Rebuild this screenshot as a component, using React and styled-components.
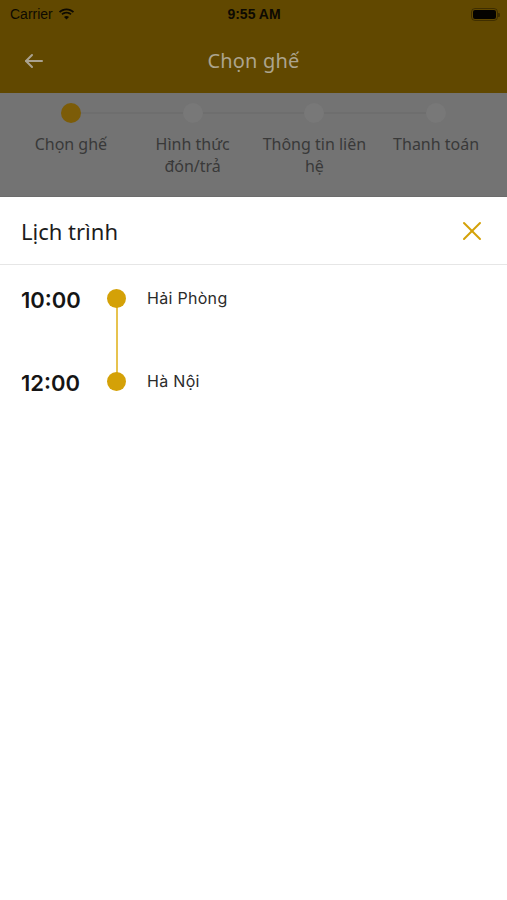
import styled, { createGlobalStyle } from "styled-components";

const GlobalStyle = createGlobalStyle`
  html, body {
    margin: 0;
    padding: 0;
    background: #ffffff;
  }
  * {
    box-sizing: border-box;
  }
`;

const Screen = styled.div`
  width: 507px;
  height: 900px;
  display: flex;
  flex-direction: column;
  font-family: "Noto Sans", "Open Sans", sans-serif;
  overflow: hidden;
`;

const TopArea = styled.div`
  background: #614800;
`;

const StatusBar = styled.div`
  height: 28px;
  display: grid;
  grid-template-columns: 1fr auto 1fr;
  align-items: center;
  padding: 0 9px 0 10px;
  color: #0d0a02;
  font-family: "Liberation Sans", Arial, sans-serif;
  font-size: 14px;
`;

const Carrier = styled.div`
  display: flex;
  align-items: center;
  gap: 5px;
`;

const Clock = styled.div`
  font-weight: 700;
`;

const Battery = styled.div`
  justify-self: end;
  width: 27px;
  height: 13px;
  border: 1px solid rgba(0, 0, 0, 0.35);
  border-radius: 4px;
  padding: 1px;
  position: relative;
  &::before {
    content: "";
    display: block;
    width: 100%;
    height: 100%;
    border-radius: 2px;
    background: #050300;
  }
  &::after {
    content: "";
    position: absolute;
    right: -3px;
    top: 4px;
    width: 2px;
    height: 4px;
    border-radius: 0 1px 1px 0;
    background: rgba(0, 0, 0, 0.35);
  }
`;

const NavBar = styled.div`
  height: 65px;
  display: flex;
  align-items: center;
  position: relative;
  padding: 0 22px;
`;

const BackButton = styled.div`
  display: flex;
  align-items: center;
  color: #aaa290;
`;

const NavTitle = styled.div`
  position: absolute;
  left: 0;
  right: 0;
  text-align: center;
  font-size: 20px;
  letter-spacing: 0.2px;
  color: #aca48e;
  pointer-events: none;
`;

const Stepper = styled.div`
  background: #737373;
  height: 104px;
  padding: 0 10px;
  display: grid;
  grid-template-columns: repeat(4, 1fr);
  position: relative;
  border-bottom: 1px solid #6c6c6c;
`;

const Step = styled.div`
  display: flex;
  flex-direction: column;
  align-items: center;
  position: relative;
  padding-top: 10px;
  &::before {
    content: "";
    position: absolute;
    top: 19px;
    left: ${(p) => (p.first ? "50%" : "0")};
    right: ${(p) => (p.last ? "50%" : "0")};
    height: 2px;
    background: #6e6e6e;
  }
`;

const StepDot = styled.div`
  width: 20px;
  height: 20px;
  border-radius: 50%;
  background: ${(p) => (p.active ? "#7c5c08" : "#787878")};
  position: relative;
  z-index: 1;
`;

const StepLabel = styled.div`
  margin-top: 10px;
  text-align: center;
  font-size: 16px;
  line-height: 22px;
  color: #393939;
  padding: 0 6px;
`;

const Sheet = styled.div`
  flex: 1;
  background: #ffffff;
`;

const SheetHeader = styled.div`
  height: 68px;
  display: flex;
  align-items: center;
  justify-content: space-between;
  padding: 0 24px 0 21px;
  border-bottom: 1px solid #e6e6e6;
`;

const SheetTitle = styled.div`
  font-size: 22px;
  color: #1c1c1c;
`;

const CloseButton = styled.div`
  display: flex;
  color: #d4a107;
`;

const Timeline = styled.div`
  padding: 16px 0 0 21px;
  display: flex;
  flex-direction: column;
  gap: 49px;
  position: relative;
`;

const Row = styled.div`
  display: grid;
  grid-template-columns: 86px 20px auto;
  align-items: center;
  height: 34px;
`;

const Time = styled.div`
  font-family: Inter, "Noto Sans", sans-serif;
  font-size: 22px;
  font-weight: 600;
  color: #151515;
  padding-top: 3px;
`;

const Dot = styled.div`
  width: 19px;
  height: 19px;
  border-radius: 50%;
  background: #d4a107;
  position: relative;
  z-index: 1;
`;

const Line = styled.div`
  position: absolute;
  left: 116px;
  top: 33px;
  width: 2px;
  height: 83px;
  background: #e7c34f;
`;

const Place = styled.div`
  margin-left: 20px;
  font-family: Inter, "Noto Sans", sans-serif;
  font-size: 16px;
  color: #2b2b2b;
  letter-spacing: 0.3px;
`;

const steps = ["Chọn ghế", "Hình thức đón/trả", "Thông tin liên hệ", "Thanh toán"];

const stops = [
  { time: "10:00", place: "Hải Phòng" },
  { time: "12:00", place: "Hà Nội" },
];

export default function App() {
  return (
    <Screen>
      <GlobalStyle />
      <TopArea>
        <StatusBar>
          <Carrier>
            Carrier
            <svg width="17" height="12" viewBox="0 0 17 12">
              <path d="M8.5 2.2c2.4 0 4.6.9 6.3 2.5l1.3-1.3C14.1 1.5 11.4.4 8.5.4S2.9 1.5.9 3.4l1.3 1.3c1.7-1.6 3.9-2.5 6.3-2.5z" fill="#0d0a02" />
              <path d="M8.5 5.6c1.4 0 2.8.5 3.8 1.5l1.3-1.3C12.3 4.5 10.5 3.8 8.5 3.8S4.7 4.5 3.4 5.8l1.3 1.3c1-1 2.4-1.5 3.8-1.5z" fill="#0d0a02" />
              <path d="M8.5 11.6l2.5-2.5c-.6-.6-1.5-1-2.5-1s-1.9.4-2.5 1z" fill="#0d0a02" />
            </svg>
          </Carrier>
          <Clock>9:55 AM</Clock>
          <Battery />
        </StatusBar>
        <NavBar>
          <BackButton>
            <svg width="24" height="24" viewBox="0 0 24 24" fill="none" stroke="currentColor" strokeWidth="2" strokeLinecap="round" strokeLinejoin="round">
              <path d="M20 12H4" />
              <path d="M10 6l-6 6 6 6" />
            </svg>
          </BackButton>
          <NavTitle>Chọn ghế</NavTitle>
        </NavBar>
      </TopArea>
      <Stepper>
        {steps.map((s, i) => (
          <Step key={s} first={i === 0} last={i === steps.length - 1}>
            <StepDot active={i === 0} />
            <StepLabel>{s}</StepLabel>
          </Step>
        ))}
      </Stepper>
      <Sheet>
        <SheetHeader>
          <SheetTitle>Lịch trình</SheetTitle>
          <CloseButton>
            <svg width="22" height="22" viewBox="0 0 22 22" fill="none" stroke="currentColor" strokeWidth="2" strokeLinecap="round">
              <path d="M3 3l16 16" />
              <path d="M19 3L3 19" />
            </svg>
          </CloseButton>
        </SheetHeader>
        <Timeline>
          <Line />
          {stops.map((s) => (
            <Row key={s.time}>
              <Time>{s.time}</Time>
              <Dot />
              <Place>{s.place}</Place>
            </Row>
          ))}
        </Timeline>
      </Sheet>
    </Screen>
  );
}
